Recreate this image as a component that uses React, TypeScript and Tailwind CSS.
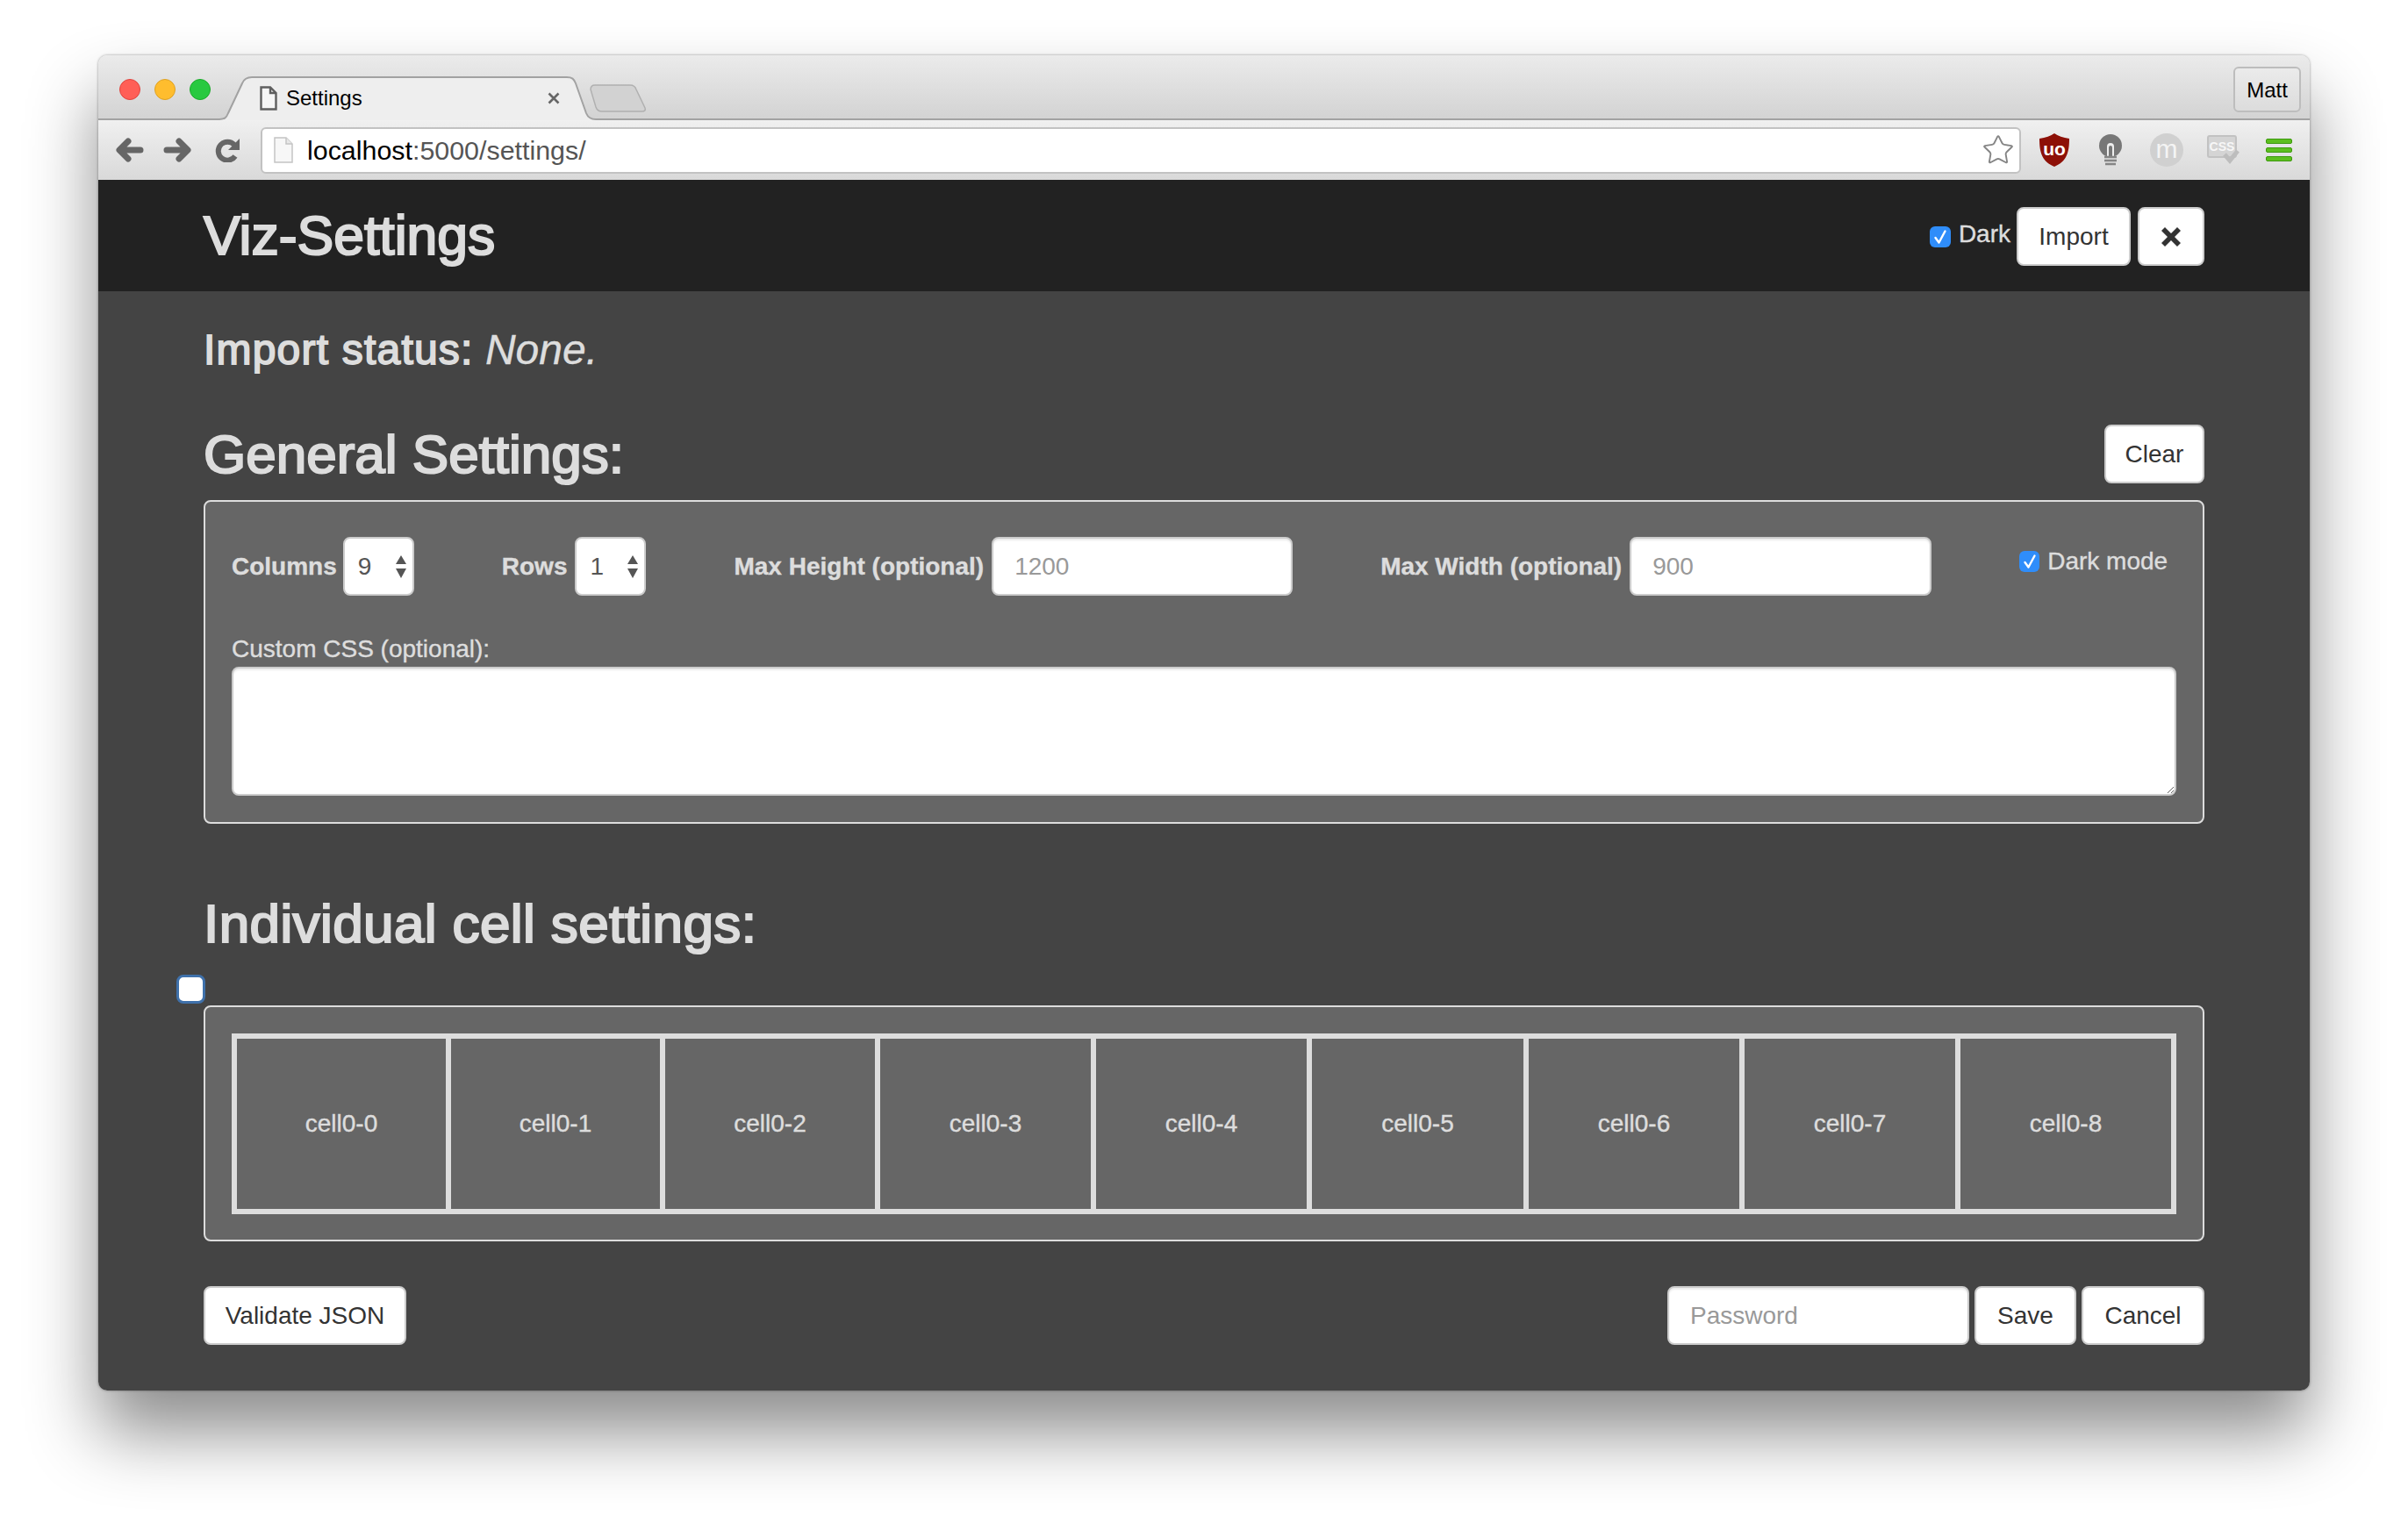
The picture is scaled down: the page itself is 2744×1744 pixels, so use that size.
import React from "react";
import { Star } from "lucide-react";

const FONT = "[font-family:'Liberation_Sans',Arial,sans-serif]";

function Check({ className }: { className: string }) {
  return (
    <span className={`flex items-center justify-center rounded-[6px] bg-[#2f8dfa] ${className}`}>
      <svg width="16" height="18" viewBox="0 0 16 18" fill="none">
        <path d="M2.5 10 L6.5 15.5 L13.5 2.5" stroke="white" strokeWidth="2.4" strokeLinecap="round" strokeLinejoin="round" />
      </svg>
    </span>
  );
}

function SelectBox({ value }: { value: string }) {
  return (
    <div className="relative h-[67px] w-[81px]">
      <select
        defaultValue={value}
        className="h-full w-full appearance-none rounded-[8px] border-2 border-[#ccc] bg-white pl-[15px] text-[28px] text-[#555] outline-none"
      >
        <option>{value}</option>
      </select>
      <svg className="pointer-events-none absolute right-[8px] top-[21px]" width="14" height="26" viewBox="0 0 14 26">
        <path d="M7 0 L13 10 L1 10 Z M1 15 L13 15 L7 26 Z" fill="#555" />
      </svg>
    </div>
  );
}

const INPUT =
  "h-[67px] rounded-[8px] border-2 border-[#ccc] bg-white px-[24px] text-[28px] text-[#555] shadow-[inset_0_2px_2px_rgba(0,0,0,0.075)] outline-none placeholder:text-[#999]";
const BTN =
  "flex h-[67px] items-center justify-center rounded-[8px] border-2 border-[#ccc] bg-white text-[28px] text-[#333]";
const H2 = "text-[62px] leading-[66px] text-[#ddd] [-webkit-text-stroke:2.2px_#ddd]";
const LABEL = "text-[28px] font-bold text-[#ddd] [-webkit-text-stroke:0.4px_#ddd]";
const SOFT = "text-[28px] text-[#ddd] [-webkit-text-stroke:0.4px_#ddd]";

export default function App() {
  return (
    <div className={`h-[1744px] w-[2744px] overflow-hidden bg-white pl-[112px] pt-[63px] ${FONT}`}>
      <div className="flex h-[1522px] w-[2520px] flex-col overflow-hidden rounded-[10px] shadow-[0_48px_80px_rgba(0,0,0,0.45),0_0_3px_rgba(0,0,0,0.4)]">
        {/* tab strip */}
        <div className="flex h-[74px] shrink-0 items-start border-b-2 border-[#a2a2a2] bg-gradient-to-b from-[#ebebeb] to-[#d3d3d3]">
          <div className="ml-[24px] mt-[27px] flex gap-[16px]">
            <span className="h-[24px] w-[24px] rounded-full border border-[#e0443e] bg-[#ff5f57]" />
            <span className="h-[24px] w-[24px] rounded-full border border-[#dea123] bg-[#ffbd2e]" />
            <span className="h-[24px] w-[24px] rounded-full border border-[#1aab29] bg-[#28c940]" />
          </div>
          <div className="relative z-10 ml-[10px] mt-[24px] flex h-[50px] w-[436px] shrink-0 items-center">
            <svg className="absolute inset-0" width="436" height="50" viewBox="0 0 436 50" fill="none">
              <path d="M0 50 L0 49 C6 49 8 47 10 42 L26 8 C28 3 31 1 37 1 L396 1 C402 1 404 3 406 8 L418 42 C420 47 423 49 429 49 L429 50 Z" fill="#eeeeee" />
              <path d="M0 49 C6 49 8 47 10 42 L26 8 C28 3 31 1 37 1 L396 1 C402 1 404 3 406 8 L418 42 C420 47 423 49 429 49" stroke="#a2a2a2" strokeWidth="2" />
            </svg>
            <svg className="relative ml-[46px]" width="20" height="28" viewBox="0 0 20 28" fill="none">
              <path d="M1.5 1.5 H12 L18.5 8 V26.5 H1.5 Z M12 1.5 V8 H18.5" stroke="#5f5f5f" strokeWidth="2.4" fill="#f6f6f6" />
            </svg>
            <span className="relative ml-[10px] text-[24px] text-black">Settings</span>
            <svg className="relative ml-auto mr-[48px]" width="14" height="14" viewBox="0 0 14 14">
              <path d="M1.5 1.5 L12.5 12.5 M12.5 1.5 L1.5 12.5" stroke="#666" strokeWidth="2.6" />
            </svg>
          </div>
          <svg className="-ml-[14px] mt-[33px] shrink-0" width="64" height="32" viewBox="0 0 64 32" fill="none">
            <path d="M1 6 C1 3 3 1 6 1 L46 1 C50 1 52 3 53 6 L63 27 C64 30 62 31 60 31 L14 31 C10 31 8 29 7 26 Z" fill="#d2d2d2" stroke="#b0b0b0" strokeWidth="1.5" />
          </svg>
          <div className="ml-auto mr-[10px] mt-[13px] flex h-[52px] w-[77px] items-center justify-center rounded-[6px] border-2 border-[#bdbdbd] bg-gradient-to-b from-[#ebebeb] to-[#dcdcdc] pt-[2px] text-[24px] text-black">
            Matt
          </div>
        </div>

        {/* toolbar */}
        <div className="flex h-[68px] shrink-0 items-center bg-gradient-to-b from-[#f0f0f0] to-[#d9d9d9] pl-[20px]">
          <svg width="32" height="28" viewBox="0 0 32 28" fill="none" stroke="#666" strokeWidth="7" strokeLinecap="round" strokeLinejoin="round">
            <path d="M28 14 H5 M14 4 L4 14 L14 24" />
          </svg>
          <svg className="ml-[22px]" width="32" height="28" viewBox="0 0 32 28" fill="none" stroke="#666" strokeWidth="7" strokeLinecap="round" strokeLinejoin="round">
            <path d="M4 14 H27 M18 4 L28 14 L18 24" />
          </svg>
          <svg className="ml-[27px]" width="30" height="28" viewBox="0 0 30 28" fill="none">
            <path d="M22 8 A10.5 10.5 0 1 0 23 21" stroke="#666" strokeWidth="6" />
            <path d="M28 1 V14 H15 Z" fill="#666" />
          </svg>
          <div className="ml-[22px] flex h-[53px] w-[2006px] items-center rounded-[6px] border-2 border-[#c2c2c2] bg-white">
            <svg className="ml-[13px]" width="22" height="30" viewBox="0 0 22 30" fill="none">
              <path d="M1 1 H14 L21 8 V29 H1 Z" fill="#f7f7f7" stroke="#c4c4c4" strokeWidth="1.5" />
              <path d="M14 1 V8 H21" fill="#e8e8e8" stroke="#c4c4c4" strokeWidth="1.5" />
            </svg>
            <span className="ml-[16px] pt-[1px] text-[30.4px] text-[#555]">
              <span className="text-black">localhost</span>:5000/settings/
            </span>
            <Star className="ml-auto mr-[5px]" size={38} strokeWidth={1.2} color="#858585" fill="#fff" />
          </div>
          {/* uBlock */}
          <svg className="ml-[20px]" width="36" height="38" viewBox="0 0 36 38">
            <path d="M18 0 C22 3 28 5 35 6 C35 22 32 32 18 38 C4 32 1 22 1 6 C8 5 14 3 18 0 Z" fill="#8d1007" />
            <text x="18" y="25" textAnchor="middle" fontSize="21" fontWeight="700" fill="#fff" fontFamily="Liberation Sans">uo</text>
          </svg>
          {/* bulb */}
          <svg className="ml-[32px]" width="28" height="36" viewBox="0 0 28 36">
            <circle cx="14" cy="13" r="13" fill="#777" />
            <path d="M10 26 V14 A4 4 0 0 1 18 14 V26 Z" fill="#eee" />
            <path d="M12 26 V15 A2 2 0 0 1 16 15 V26 Z" fill="#777" />
            <path d="M7 26 H21 M7 30 H21 M8 34 H20" stroke="#858585" strokeWidth="2.6" />
          </svg>
          {/* m */}
          <svg className="ml-[31px]" width="38" height="38" viewBox="0 0 38 38">
            <circle cx="19" cy="19" r="19" fill="#d0d0d0" />
            <text x="19" y="28" textAnchor="middle" fontSize="30" fill="#f4f4f4" fontFamily="Liberation Sans">m</text>
          </svg>
          {/* css */}
          <svg className="ml-[27px]" width="38" height="34" viewBox="0 0 38 34">
            <rect x="1" y="1" width="32" height="24" rx="2" fill="#d4d4d4" stroke="#c2c2c2" strokeWidth="2" />
            <text x="17" y="18" textAnchor="middle" fontSize="14" fontWeight="700" fill="#f7f7f7" fontFamily="Liberation Sans">CSS</text>
            <path d="M20 22 L26 29 L35 18" fill="none" stroke="#bdbdbd" strokeWidth="5" />
          </svg>
          {/* menu */}
          <div className="ml-[29px] flex w-[30px] flex-col gap-[4px]">
            <span className="h-[6px] rounded-[2px] border border-[#3f9a11] bg-[#5cbf1e]" />
            <span className="h-[6px] rounded-[2px] border border-[#3f9a11] bg-[#5cbf1e]" />
            <span className="h-[6px] rounded-[2px] border border-[#3f9a11] bg-[#5cbf1e]" />
          </div>
        </div>

        {/* navbar */}
        <div className="flex h-[127px] shrink-0 items-center justify-between bg-[#222] pl-[120px] pr-[120px] pt-[2px]">
          <div className="mb-[3px] text-[62.5px] leading-[72px] text-[#ddd] [-webkit-text-stroke:2.2px_#ddd]">Viz-Settings</div>
          <div className="flex items-center">
            <Check className="h-[24px] w-[24px]" />
            <span className={`mb-[5px] ml-[9px] ${SOFT}`}>Dark</span>
            <button className={`${BTN} ml-[7px] w-[130px]`}>Import</button>
            <button className={`${BTN} ml-[8px] w-[76px]`}>
              <svg width="24" height="24" viewBox="0 0 24 24">
                <path d="M5 1 L12 8 L19 1 L23 5 L16 12 L23 19 L19 23 L12 16 L5 23 L1 19 L8 12 L1 5 Z" fill="#333" />
              </svg>
            </button>
          </div>
        </div>

        {/* content */}
        <div className="flex flex-1 flex-col bg-[#444] px-[120px] pt-[40px]">
          <div className="text-[48px] leading-[54px] text-[#ddd]">
            <span className="tracking-[1.2px] [-webkit-text-stroke:1.8px_#ddd]">Import status:</span>{" "}
            <em className="[-webkit-text-stroke:0.4px_#ddd]">None.</em>
          </div>
          <div className="mt-[58px] flex items-center justify-between">
            <h2 className={H2}>General Settings:</h2>
            <button className={`${BTN} w-[114px]`}>Clear</button>
          </div>
          <div className="mt-[19px] rounded-[8px] border-2 border-[#ddd] bg-[#666] px-[30px] pb-[30px] pt-[40px]">
            <div className="flex items-center gap-[100px]">
              <div className="flex items-center gap-[7px]">
                <label className={LABEL}>Columns</label>
                <SelectBox value="9" />
              </div>
              <div className="flex items-center gap-[9px]">
                <label className={LABEL}>Rows</label>
                <SelectBox value="1" />
              </div>
              <div className="flex items-center gap-[9px]">
                <label className={LABEL}>Max Height (optional)</label>
                <input className={`${INPUT} w-[343px]`} placeholder="1200" />
              </div>
              <div className="flex items-center gap-[9px]">
                <label className={LABEL}>Max Width (optional)</label>
                <input className={`${INPUT} w-[344px]`} placeholder="900" />
              </div>
              <div className="mb-[12px] flex items-center gap-[9px]">
                <Check className="h-[24px] w-[23px]" />
                <span className={SOFT}>Dark mode</span>
              </div>
            </div>
            <div className={`mt-[41px] leading-[40px] ${SOFT}`}>Custom CSS (optional):</div>
            <textarea className="block h-[147px] w-[2216px] rounded-[8px] border-2 border-[#ccc] bg-white shadow-[inset_0_2px_2px_rgba(0,0,0,0.075)] outline-none" />
          </div>

          <h2 className={`${H2} mt-[81px] tracking-[0.4px]`}>Individual cell settings:</h2>
          <span className="-ml-[31px] mt-[25px] h-[33px] w-[33px] rounded-[8px] border-[3px] border-[#3f71ab] bg-white" />
          <div className="mt-[2px] rounded-[8px] border-2 border-[#ddd] bg-[#666] px-[30px] pb-[29px] pt-[30px]">
            <div className="grid h-[206px] grid-cols-[238px_238px_239px_240px_240px_241px_240px_240px_240px] gap-[6px] bg-[#ddd] p-[6px]">
              {Array.from({ length: 9 }, (_, i) => (
                <div key={i} className={`flex items-center justify-center bg-[#666] ${SOFT}`}>
                  cell0-{i}
                </div>
              ))}
            </div>
          </div>

          <div className="mt-[51px] flex items-center">
            <button className={`${BTN} w-[231px]`}>Validate JSON</button>
            <input className={`${INPUT} ml-auto w-[344px]`} placeholder="Password" />
            <button className={`${BTN} ml-[6px] w-[116px]`}>Save</button>
            <button className={`${BTN} ml-[6px] w-[140px]`}>Cancel</button>
          </div>
        </div>
      </div>
    </div>
  );
}
